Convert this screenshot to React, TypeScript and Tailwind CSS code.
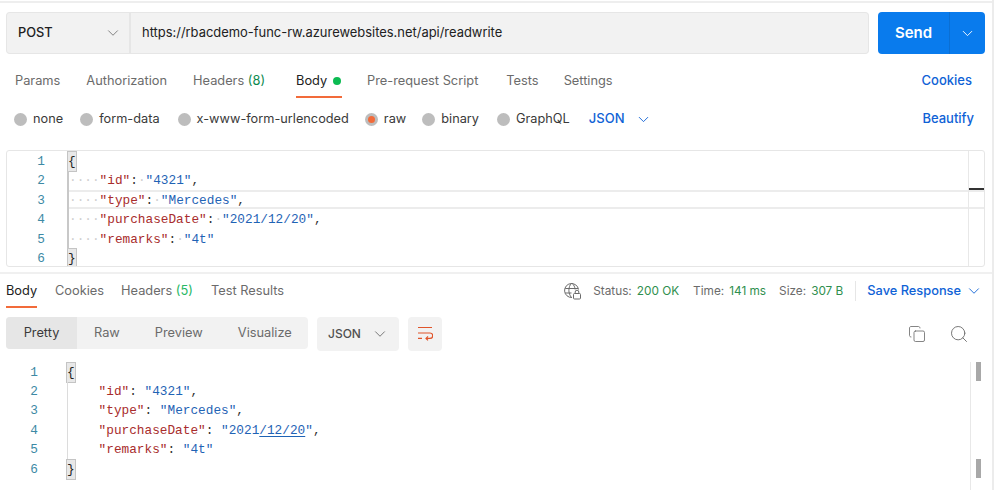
import React from 'react';
import { ChevronDown, Copy, Search } from 'lucide-react';

const radios = [
  { label: 'none', cls: 'mr-[17px]' },
  { label: 'form-data', cls: 'mr-[18px]' },
  { label: 'x-www-form-urlencoded', cls: 'mr-[16px]' },
  { label: 'raw', active: true, cls: 'mr-[16px]' },
  { label: 'binary', cls: 'mr-[18px]' },
  { label: 'GraphQL', cls: 'mr-[19px]' },
];

const codeLines = [
  { key: '"id"', value: '"4321"', comma: true },
  { key: '"type"', value: '"Mercedes"', comma: true },
  { key: '"purchaseDate"', value: '"2021/12/20"', comma: true },
  { key: '"remarks"', value: '"4t"' },
];

function Brace({ ch }: { ch: string }) {
  return <span className="inline-block w-[7.65px] h-[19px] leading-[19px] bg-[#e8e8e8] outline outline-1 outline-[#c4c4c4] text-[#222]">{ch}</span>;
}

function LineNo({ n }: { n: number }) {
  return <div className="w-[61px] pr-[23px] text-right text-[#3d8aa5] shrink-0">{n}</div>;
}

function WrapIcon() {
  return (
    <svg width="16" height="16" viewBox="0 0 16 16" fill="none" stroke="#e0552b" strokeWidth="1.2">
      <path d="M1 1.5h14M1 7h12a2.6 2.6 0 0 1 0 5.4H9M1 12.4h4M11 10.4l-2 2 2 2" />
    </svg>
  );
}

function GlobeLock() {
  return (
    <svg width="18" height="18" viewBox="0 0 18 18" fill="none" stroke="#6b6b6b" strokeWidth="1">
      <path d="M9 15.5A7 7 0 1 1 15.5 7.5M2.2 6.5h13M2.2 11h6.3M8.5 1.2C5 5 5 11.5 8.5 15.5M9 1.2c1.8 1.6 3 4 3.1 6.3" />
      <rect x="10.5" y="11.5" width="7" height="5.5" rx="1" />
      <path d="M12.2 11.5V10a1.8 1.8 0 0 1 3.6 0v1.5" />
    </svg>
  );
}

export default function App() {
  return (
    <div className="w-[999px] h-[490px] overflow-hidden bg-white text-[12.8px] text-[#6b6b6b]" style={{ fontFamily: 'Inter, sans-serif' }}>
      <div className="w-[994px] h-[490px] border-r-2 border-[#ececec]">
        <div className="h-[3px] border-b-2 border-[#eeeeee]" />

        {/* url bar */}
        <div className="flex pl-[6px] pt-[9px] h-[51px]">
          <div className="flex items-center justify-between w-[125px] h-[42px] pl-[11px] pr-[7px] bg-[#f2f2f2] border border-[#e6e6e6] border-r-2 rounded-l-[4px] font-medium text-[#212121]">
            <span>POST</span>
            <ChevronDown size={18} strokeWidth={1.1} color="#6b6b6b" />
          </div>
          <div className="flex items-center w-[738px] h-[42px] pl-[11px] text-[12.93px] bg-[#f2f2f2] border border-l-0 border-[#e6e6e6] rounded-r-[4px] text-[#212121]">
            https://rbacdemo-func-rw.azurewebsites.net/api/readwrite
          </div>
          <div className="flex ml-[9px] w-[107px] h-[42px] bg-[#097bed] rounded-[4px] text-white">
            <div className="w-[72px] flex items-center justify-center text-[15px] font-semibold border-r border-[#0a6fd4]">Send</div>
            <div className="flex-1 flex items-center justify-center"><ChevronDown size={17} strokeWidth={1.3} /></div>
          </div>
        </div>

        {/* request tabs */}
        <div className="flex items-start h-[45px] pl-[15px] pt-[18px] leading-[18px]">
          <span className="mr-[26px]">Params</span>
          <span className="mr-[26px]">Authorization</span>
          <span className="mr-[31px]">Headers <span className="text-[#0e8a4f]">(8)</span></span>
          <div className="mr-[25px] w-[46px] h-[26px] border-b-2 border-[#f26b3a]">
            <span className="text-[#212121]">Body</span>
            <span className="inline-block ml-[6px] w-[8px] h-[8px] rounded-full bg-[#0cbb52]" />
          </div>
          <span className="mr-[28px]">Pre-request Script</span>
          <span className="mr-[25px]">Tests</span>
          <span>Settings</span>
          <span className="ml-auto mr-[20px] -mt-px text-[13px] font-medium text-[#0f62d6]">Cookies</span>
        </div>

        {/* body type */}
        <div className="flex items-center h-[40px] pl-[14px] mb-[11px] text-[12.75px]">
          {radios.map((r) => (
            <div key={r.label} className={`flex items-center ${r.cls}`}>
              {r.active ? (
                <span className="flex items-center justify-center w-[13px] h-[13px] rounded-full bg-[#bdbdbd] mr-[6px]">
                  <span className="w-[7px] h-[7px] rounded-full bg-[#f26b3a]" />
                </span>
              ) : (
                <span className="w-[13px] h-[13px] rounded-full bg-[#bdbdbd] mr-[6px]" />
              )}
              <span className="text-[#3a3a3a]">{r.label}</span>
            </div>
          ))}
          <span className="text-[13px] font-medium text-[#0f62d6]">JSON</span>
          <ChevronDown size={17} strokeWidth={1.3} color="#0f62d6" className="ml-[11px]" />
          <span className="ml-auto mr-[18px] text-[13px] font-medium text-[#0f62d6]">Beautify</span>
        </div>

        {/* request editor */}
        <div className="relative overflow-hidden ml-[6px] w-[979px] h-[117px] border border-[#e6e6e6] rounded-[3px] pt-[1px] text-[12.75px] leading-[19.4px]" style={{ fontFamily: '"Liberation Mono", monospace' }}>
          <div className="absolute left-[62px] right-0 top-[39px] h-[19px] border-y-2 border-[#ececec]" />
          <div className="absolute right-[15px] top-0 bottom-0 w-px bg-[#e8e8e8]" />
          <div className="absolute right-0 top-[37px] w-[15px] h-[2px] bg-[#333]" />
          <div className="flex"><LineNo n={1} /><Brace ch="{" /></div>
          {codeLines.map((l, i) => (
            <div key={l.key} className="flex">
              <LineNo n={i + 2} />
              <div className="relative flex-1 whitespace-pre border-l-2 border-[#c8c8c8] -ml-[1px]">
                <span className="text-[#cfcfcf]">····</span>
                <span className="text-[#a82c2c]">{l.key}</span>
                <span className="text-[#333]">:</span>
                <span className="text-[#cfcfcf]">·</span>
                <span className="text-[#1f63b5]">{l.value}</span>
                {l.comma && <span className="text-[#333]">,</span>}
              </div>
            </div>
          ))}
          <div className="flex"><LineNo n={6} /><Brace ch="}" /></div>
        </div>

        <div className="h-[5px] mt-[5px] border-t-2 border-[#f0f0f0]" />

        {/* response tabs */}
        <div className="flex items-start h-[29px] pl-[6px] pt-[5px] leading-[18px]">
          <div className="w-[31px] h-[26px] mr-[18px] border-b-2 border-[#f26b3a] text-[#212121]">Body</div>
          <span className="mr-[17px]">Cookies</span>
          <span className="mr-[18px]">Headers <span className="text-[#27b765]">(5)</span></span>
          <span>Test Results</span>
          <div className="flex items-center ml-auto mr-[9px] text-[11.8px] h-[18px]">
            <GlobeLock />
            <span className="ml-[12px]">Status:</span>
            <span className="ml-[5px] text-[#2f8f4e]">200 OK</span>
            <span className="ml-[14px]">Time:</span>
            <span className="ml-[5px] text-[#2f8f4e]">141 ms</span>
            <span className="ml-[13px]">Size:</span>
            <span className="ml-[5px] text-[#2f8f4e]">307 B</span>
            <span className="ml-[12px] mr-[11px] w-px h-[20px] bg-[#e6e6e6]" />
            <span className="text-[12.8px] font-medium text-[#0f62d6]">Save Response</span>
            <ChevronDown size={18} strokeWidth={1.2} color="#0f62d6" className="ml-[4px]" />
          </div>
        </div>

        {/* response toolbar */}
        <div className="flex items-start h-[54px] pl-[6px] pt-[11px]">
          <div className="flex items-center w-[302px] h-[32px] rounded-[4px] bg-[#f2f2f2]">
            <div className="flex items-center justify-center w-[71px] h-[32px] rounded-l-[4px] bg-[#e6e6e6] text-[#3a3a3a]">Pretty</div>
            <span className="ml-[17px]">Raw</span>
            <span className="ml-[35px]">Preview</span>
            <span className="ml-[35px]">Visualize</span>
          </div>
          <div className="flex items-center justify-between ml-[9px] w-[82px] h-[34px] pl-[11px] pr-[10px] rounded-[4px] bg-[#f2f2f2] text-[12px] font-medium text-[#505050]">
            JSON <ChevronDown size={18} strokeWidth={1.2} color="#6b6b6b" />
          </div>
          <div className="flex items-center justify-center ml-[9px] w-[34px] h-[34px] rounded-[4px] bg-[#f2f2f2]"><WrapIcon /></div>
          <Copy size={18} strokeWidth={1.1} color="#6b6b6b" className="ml-[466px] mt-[8px]" />
          <Search size={20} strokeWidth={1.1} color="#6b6b6b" className="ml-[23px] mt-[7px]" />
        </div>

        {/* response body */}
        <div className="relative pt-[2.6px] text-[12.75px] leading-[19.4px]" style={{ fontFamily: '"Liberation Mono", monospace' }}>
          <div className="absolute left-[970px] top-[2px] w-px h-[128px] bg-[#e8e8e8]" />
          <div className="absolute left-[976px] top-[2px] w-[5px] h-[19px] bg-[#a8a8a8]" />
          <div className="absolute left-[976px] top-[99px] w-[5px] h-[19px] bg-[#a8a8a8]" />
          <div className="flex"><LineNo n={1} /><div className="ml-[6px]"><Brace ch="{" /></div></div>
          {codeLines.map((l, i) => (
            <div key={l.key} className="flex">
              <LineNo n={i + 2} />
              <div className="flex-1 whitespace-pre ml-[6px] border-l border-[#dcdcdc]">
                <span>{'    '}</span>
                <span className="text-[#a82c2c]">{l.key}</span>
                <span className="text-[#333]">: </span>
                {i === 2 ? (
                  <span className="text-[#1f63b5]">"2021<span className="underline underline-offset-2">/12/20</span>"</span>
                ) : (
                  <span className="text-[#1f63b5]">{l.value}</span>
                )}
                {l.comma && <span className="text-[#333]">,</span>}
              </div>
            </div>
          ))}
          <div className="flex"><LineNo n={6} /><div className="ml-[6px]"><Brace ch="}" /></div></div>
        </div>
      </div>
    </div>
  );
}
